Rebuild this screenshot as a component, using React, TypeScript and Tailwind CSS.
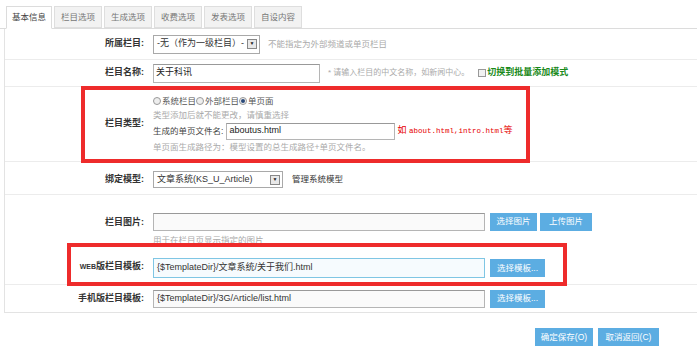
const font = { fontFamily: '"Liberation Sans", "Noto Sans CJK SC", sans-serif' };

const tabs = ['基本信息', '栏目选项', '生成选项', '收费选项', '发表选项', '自设内容'];

function Label({ children }: { children: React.ReactNode }) {
  return (
    <div className="w-[144px] shrink-0 pr-[5px] text-right text-[9px] font-bold text-[#333]">
      {children}
    </div>
  );
}

function BlueButton({ children, w }: { children: React.ReactNode; w: string }) {
  return (
    <button className={`${w} h-[18px] bg-[#5cade2] text-[8.5px] text-white flex items-center justify-center`}>
      {children}
    </button>
  );
}

function Radio({ checked }: { checked?: boolean }) {
  return (
    <span className="inline-flex w-[8px] h-[8px] rounded-full border border-[#999] bg-[#eee] items-center justify-center mr-[1px]">
      {checked && <span className="w-[4px] h-[4px] rounded-full bg-[#2a4a7a]" />}
    </span>
  );
}

export default function App() {
  return (
    <div className="relative w-[697px] h-[350px] overflow-hidden bg-white" style={font}>
      {/* tab bar */}
      <div className="flex items-end pl-[6px] pt-[6px] gap-[2px] border-b border-[#dcdcdc]">
        {tabs.map((t, i) => (
          <div
            key={t}
            className={
              i === 0
                ? 'w-[46px] h-[23px] -mb-px bg-white border border-[#dcdcdc] border-b-white flex items-center justify-center text-[8.5px] text-[#444]'
                : 'w-[48px] h-[22px] bg-[#f2f2f2] border border-[#dedede] flex items-center justify-center text-[8.5px] text-[#777]'
            }
          >
            {t}
          </div>
        ))}
      </div>

      {/* form panel */}
      <div className="ml-[4px] border-l border-b border-[#e3e3e3]">
        <div className="h-[31px] flex items-center border-b border-[#ececec]">
          <Label>所属栏目:</Label>
          <div className="flex items-center pl-[4px]">
            <div className="w-[107px] h-[19px] border border-[#a9a9a9] flex items-center justify-between pl-[3px] pr-[2px] text-[9px] text-[#333]">
              <span>-无（作为一级栏目）-</span>
              <span className="w-[10px] h-[10px] border border-[#888] bg-[#e8e8e8] flex items-center justify-center text-[5px] text-[#222]">▼</span>
            </div>
            <span className="ml-[8px] text-[8.5px] text-[#aaa]">不能指定为外部频道或单页栏目</span>
          </div>
        </div>

        <div className="h-[27px] flex items-center border-b border-[#ececec]">
          <Label>栏目名称:</Label>
          <div className="flex items-center pl-[4px]">
            <div className="w-[167px] h-[19px] border border-[#b5b5b5] border-t-[#999] flex items-center pl-[2px] text-[9px] text-[#222]">
              关于科讯
            </div>
            <span className="ml-[8px] text-[8px] text-[#aaa]">* 请输入栏目的中文名称，如新闻中心。</span>
            <span className="ml-[9px] w-[8px] h-[8px] border border-[#999] bg-[#f2f2f2]" />
            <span className="ml-[1px] text-[9px] font-bold text-[#1a8a1a]">切换到批量添加模式</span>
          </div>
        </div>

        <div className="h-[75px] flex items-center border-b border-[#ececec]">
          <Label>栏目类型:</Label>
          <div className="flex flex-col pl-[4px] text-[8.5px]">
            <div className="flex items-center text-[#555] h-[14px]">
              <Radio />系统栏目<Radio />外部栏目<Radio checked />单页面
            </div>
            <div className="h-[14px] flex items-center text-[#aaa]">类型添加后就不能更改，请慎重选择</div>
            <div className="flex items-center h-[18px] text-[#444]">
              <span>生成的单页文件名:</span>
              <div className="ml-[3px] w-[169px] h-[17px] border border-[#b5b5b5] border-t-[#999] flex items-center pl-[2px] text-[9px] text-[#222]">
                aboutus.html
              </div>
              <span className="ml-[2px] text-[#e60000] text-[9px]">
                如 <span className="text-[7.5px]" style={{ fontFamily: '"Liberation Mono", monospace' }}>about.html,intro.html</span>等
              </span>
            </div>
            <div className="h-[14px] flex items-center text-[#aaa]">单页面生成路径为：模型设置的总生成路径+单页文件名。</div>
          </div>
        </div>

        <div className="h-[33px] flex items-center pt-[3px] border-b border-[#ececec]">
          <Label>绑定模型:</Label>
          <div className="flex items-center pl-[4px]">
            <div className="w-[130px] h-[17px] border border-[#a9a9a9] flex items-center justify-between pl-[3px] pr-[2px] text-[9px] text-[#333]">
              <span>文章系统(KS_U_Article)</span>
              <span className="w-[10px] h-[10px] border border-[#888] bg-[#e8e8e8] flex items-center justify-center text-[5px] text-[#222]">▼</span>
            </div>
            <span className="ml-[9px] text-[8.5px] text-[#333]">管理系统模型</span>
          </div>
        </div>

        <div className="h-[55px] flex items-center">
          <Label>栏目图片:</Label>
          <div className="flex flex-col pl-[4px] pt-[14px]">
            <div className="flex items-center">
              <div className="w-[332px] h-[18px] border border-[#b5b5b5] border-t-[#999] bg-[#fafafa]" />
              <div className="ml-[5px] flex gap-[3px]">
                <BlueButton w="w-[47px]">选择图片</BlueButton>
                <BlueButton w="w-[52px]">上传图片</BlueButton>
              </div>
            </div>
            <div className="mt-[3px] text-[8.5px] text-[#aaa]">用于在栏目页显示指定的图片</div>
          </div>
        </div>

        <div className="h-[35px] flex items-center border-b border-[#ececec]">
          <Label>
            <span className="text-[7px]">WEB</span>版栏目模板:
          </Label>
          <div className="flex items-center pl-[4px] pt-[2px]">
            <div className="w-[332px] h-[20px] border border-[#7fc6e4] bg-[#f6fbfe] flex items-center pl-[3px] text-[9px] text-[#333]">
              {'{$TemplateDir}/文章系统/关于我们.html'}
            </div>
            <div className="ml-[5px]">
              <BlueButton w="w-[55px]">选择模板...</BlueButton>
            </div>
          </div>
        </div>

        <div className="h-[27px] flex items-center">
          <Label>手机版栏目模板:</Label>
          <div className="flex items-center pl-[4px]">
            <div className="w-[332px] h-[18px] border border-[#b5b5b5] border-t-[#999] bg-[#fafafa] flex items-center pl-[3px] text-[9px] text-[#333]">
              {'{$TemplateDir}/3G/Article/list.html'}
            </div>
            <div className="ml-[5px]">
              <BlueButton w="w-[55px]">选择模板...</BlueButton>
            </div>
          </div>
        </div>
      </div>

      <div className="flex justify-end gap-[5px] pr-[38px] pt-[15px]">
        <BlueButton w="w-[58px]">确定保存(O)</BlueButton>
        <BlueButton w="w-[61px]">取消返回(C)</BlueButton>
      </div>

      {/* annotation boxes */}
      <div className="absolute left-[81px] top-[86px] w-[449px] h-[77px] border-4 border-[#ee2b2b] pointer-events-none" />
      <div className="absolute left-[67px] top-[243px] w-[500px] h-[43px] border-4 border-[#ee2b2b] pointer-events-none" />
    </div>
  );
}
